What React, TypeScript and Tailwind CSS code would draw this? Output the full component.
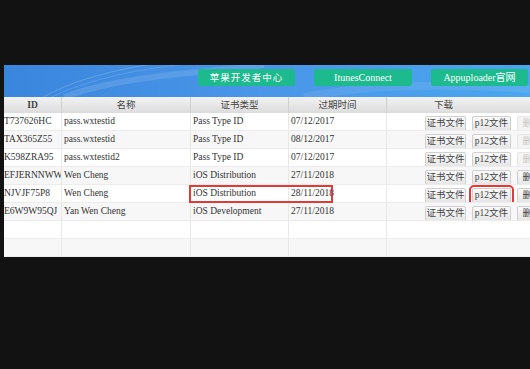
import React from "react";

const rows = [
  { id: "T737626HC", name: "pass.wxtestid", type: "Pass Type ID", date: "07/12/2017", del: false },
  { id: "TAX365Z55", name: "pass.wxtestid", type: "Pass Type ID", date: "08/12/2017", del: false },
  { id: "K598ZRA95", name: "pass.wxtestid2", type: "Pass Type ID", date: "07/12/2017", del: false },
  { id: "EFJERNNWW", name: "Wen Cheng", type: "iOS Distribution", date: "27/11/2018", del: true },
  { id: "NJVJF75P8", name: "Wen Cheng", type: "iOS Distribution", date: "28/11/2018", del: true },
  { id: "E6W9W95QJ", name: "Yan Wen Cheng", type: "iOS Development", date: "27/11/2018", del: true },
];

const serif = "font-['Liberation_Serif','Noto_Sans_CJK_SC',serif]";
const cols = "grid grid-cols-[58px_129px_98px_98px_1fr]";

function Btn({ label, faded, hot }: { label: string; faded?: boolean; hot?: boolean }) {
  return (
    <div
      className={
        "h-[15px] flex items-center justify-center rounded-[2px] border text-[9.5px] leading-none " +
        (faded
          ? "border-[#e6e6e6] bg-[#f4f4f4] text-[#c8c8c8]"
          : "border-[#cfcfcf] bg-gradient-to-b from-[#fbfbfb] to-[#e6e6e6] text-[#444]") +
        (hot ? " outline outline-2 outline-[#e53935] outline-offset-1" : "")
      }
    >
      {label}
    </div>
  );
}

export default function App() {
  return (
    <div className="w-[530px] h-[369px] bg-[#121212] overflow-hidden pt-[65px] pl-[4px]">
      <div className="relative bg-white">
        {/* banner */}
        <div className="relative h-[32px] bg-gradient-to-r from-[#3a86dd] via-[#4a96e8] to-[#4aa6ee] overflow-hidden">
          <svg className="absolute inset-0" width="526" height="32" viewBox="0 0 526 32">
            <path d="M40 32 C70 14 120 2 170 -4" stroke="#ffffff" strokeOpacity="0.18" strokeWidth="1" fill="none" />
            <path d="M48 32 C80 16 130 4 190 -2" stroke="#ffffff" strokeOpacity="0.14" strokeWidth="1" fill="none" />
            <path d="M60 32 C120 10 200 8 260 0" stroke="#ffffff" strokeOpacity="0.12" strokeWidth="6" fill="none" />
            <path d="M300 32 C360 20 430 18 526 24" stroke="#ffffff" strokeOpacity="0.08" strokeWidth="8" fill="none" />
          </svg>
          <div className="relative flex items-start pt-[4px] pl-[194px] gap-[19px]">
            <div className="w-[97px] h-[17px] rounded-[2px] bg-[#1dba8e] text-white text-[9.5px] flex items-center justify-center font-['Noto_Sans_CJK_SC',sans-serif] tracking-[1px]">
              苹果开发者中心
            </div>
            <div className={"w-[98px] h-[17px] rounded-[2px] bg-[#1dba8e] text-white text-[10px] flex items-center justify-center " + serif}>
              ItunesConnect
            </div>
            <div className={"w-[97px] h-[17px] rounded-[2px] bg-[#1dba8e] text-white text-[10px] flex items-center justify-center " + serif}>
              Appuploader官网
            </div>
          </div>
        </div>

        {/* header */}
        <div className={cols + " h-[16px] bg-gradient-to-b from-[#f2f2f2] to-[#dcdcdc] text-[#444] text-[9.5px] " + serif}>
          <div className="flex items-center justify-center border-r border-[#d0d0d0] font-bold">ID</div>
          <div className="flex items-center justify-center border-r border-[#d0d0d0]">名称</div>
          <div className="flex items-center justify-center border-r border-[#d0d0d0]">证书类型</div>
          <div className="flex items-center justify-center border-r border-[#d0d0d0]">过期时间</div>
          <div className="flex items-center justify-center pr-[30px]">下载</div>
        </div>

        {/* rows */}
        {[...rows, null, null].map((r, i) => (
          <div
            key={i}
            className={cols + " h-[18px] text-[9.5px] text-[#333] border-b border-[#ececec] " + serif + (i % 2 ? " bg-[#f7f7f7]" : " bg-white")}
          >
            <div className="border-r border-[#e8e8e8] pt-[1px] overflow-hidden whitespace-nowrap">{r?.id}</div>
            <div className="border-r border-[#e8e8e8] pt-[1px] pl-[2px]">{r?.name}</div>
            <div className="border-r border-[#e8e8e8] pt-[1px] pl-[2px]">{r?.type}</div>
            <div className="border-r border-[#e8e8e8] pt-[1px] pl-[2px]">{r?.date}</div>
            <div className="flex items-start pt-[3px] pl-[38px] gap-[6px] overflow-hidden">
              {r && (
                <>
                  <div className="w-[41px] shrink-0"><Btn label="证书文件" /></div>
                  <div className="w-[39px] shrink-0"><Btn label="p12文件" hot={i === 4} /></div>
                  <div className="w-[30px] shrink-0"><Btn label="删除" faded={!r.del} /></div>
                </>
              )}
            </div>
          </div>
        ))}

        {/* highlight on cert type */}
        <div className="absolute left-[185px] top-[120px] w-[144px] h-[18px] border-2 border-[#e53935] pointer-events-none" />
      </div>
    </div>
  );
}
